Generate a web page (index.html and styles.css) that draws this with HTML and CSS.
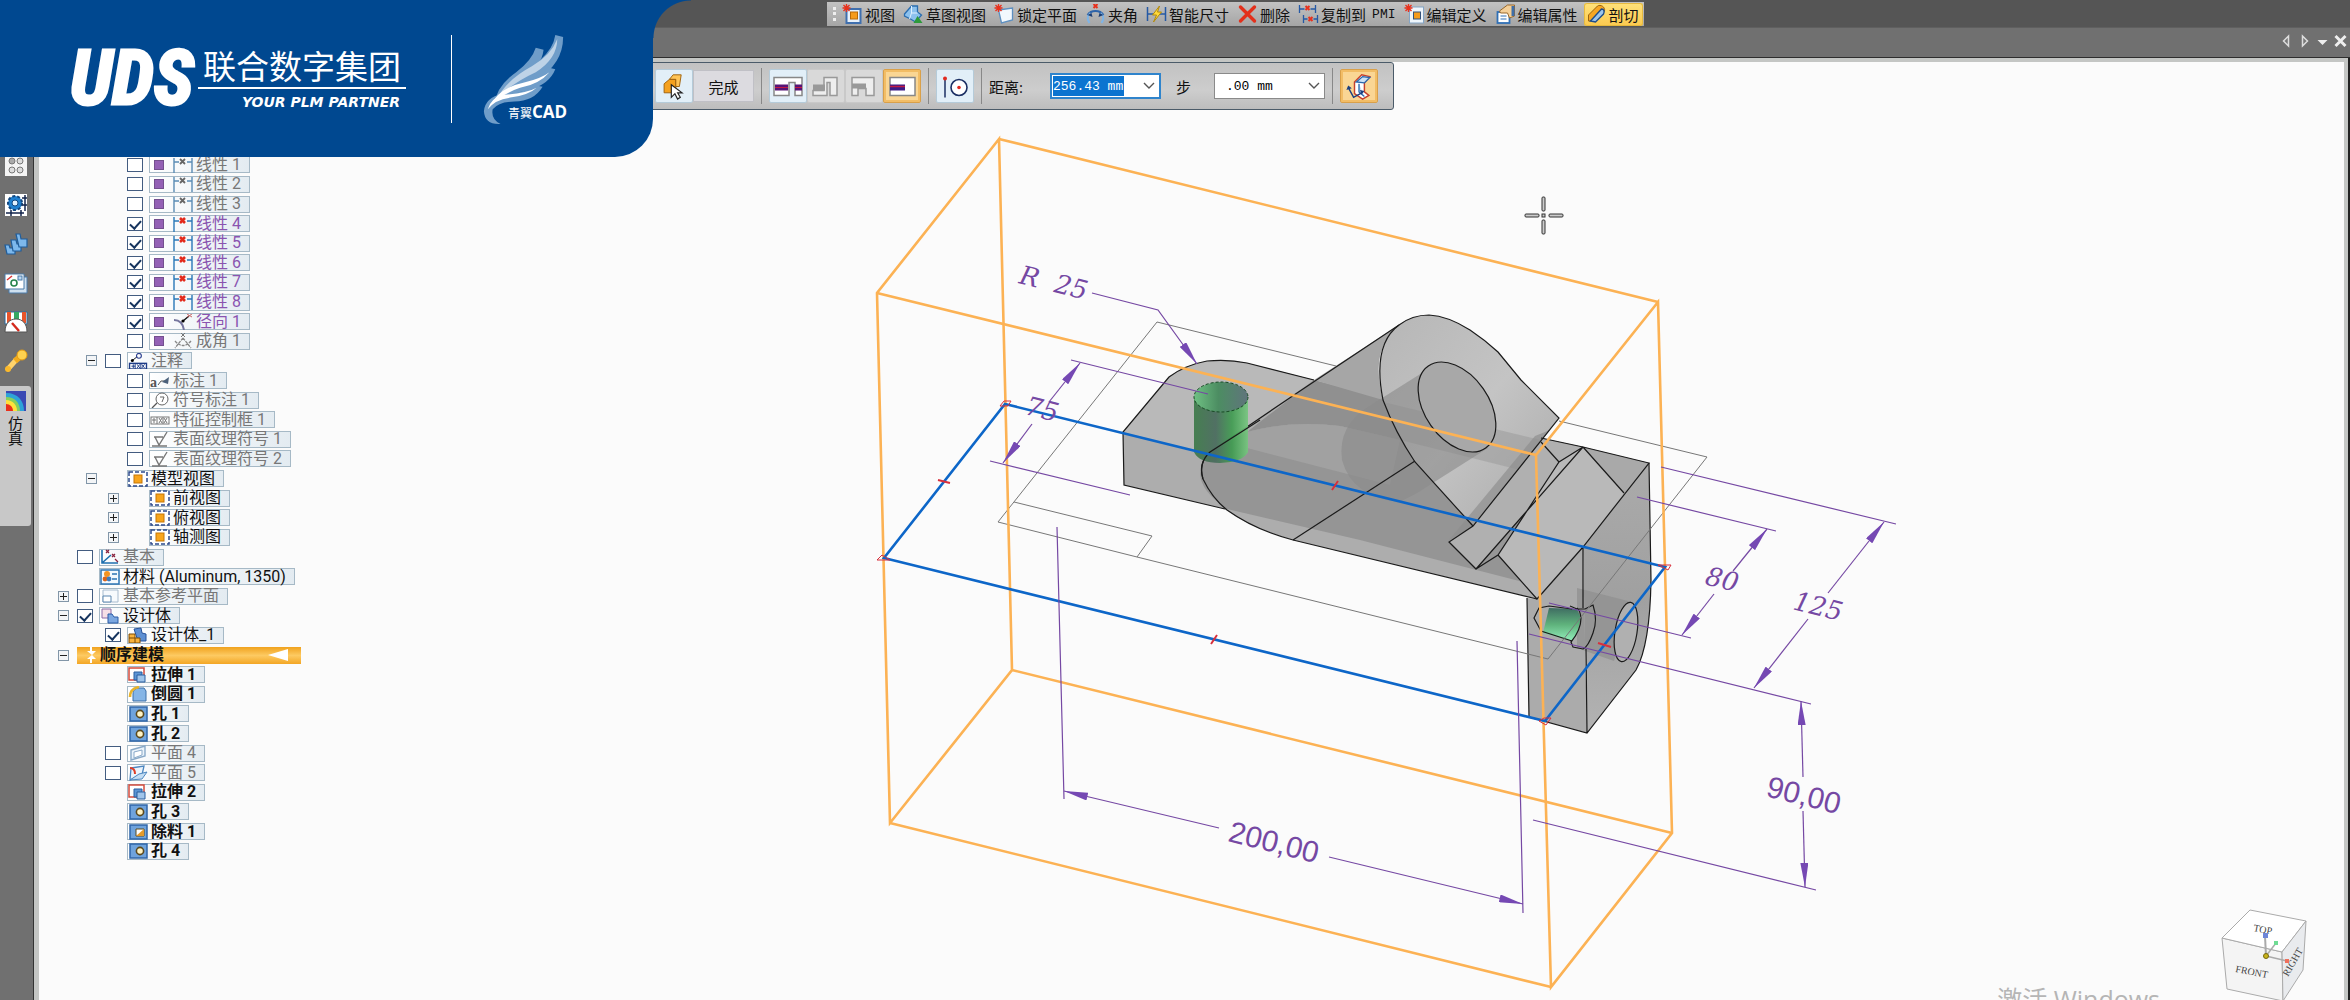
FILE: index.html
```
<!DOCTYPE html>
<html lang="zh-CN">
<head>
    <meta charset="UTF-8">
    <meta name="viewport" content="width=device-width, initial-scale=1.0">
    <title>青翼CAD</title>
    <link rel="stylesheet" href="styles.css">
</head>
<body>
<!-- shared icons -->
<svg class="defs" aria-hidden="true">
    <symbol id="i-view" viewBox="0 0 20 20"><rect x="4" y="5" width="14" height="14" fill="#e8f1fa" stroke="#3f6fae" stroke-width="2"/><rect x="8" y="8" width="7" height="7" fill="#f59b1c" stroke="#b96a08"/><path d="M4 0v8M0 4h8M1 1l6 6M7 1l-6 6" stroke="#e8321e" stroke-width="1.4"/></symbol>
    <symbol id="i-sketchview" viewBox="0 0 20 20"><path d="M1 10L8 2h6v6l4 3-6 7-5-3-6-3z" fill="#8cc1ee" stroke="#2a6db0" stroke-width="1.3"/><path d="M8 2v7h6M8 9l-2 6" stroke="#dff0ff" fill="none"/><path d="M10 19l4-7 5 7z" fill="#2d9a3a"/></symbol>
    <symbol id="i-lock" viewBox="0 0 20 20"><path d="M4 6l14-2v12L7 19z" fill="#f2f8fd" stroke="#5d8fc0" stroke-width="1.3"/><path d="M4 0v8M0 4h8M1 1l6 6M7 1l-6 6" stroke="#e8321e" stroke-width="1.4"/></symbol>
    <symbol id="i-angle" viewBox="0 0 20 20"><path d="M2 11C4 8 7 7 10 7s6 1 8 4" fill="none" stroke="#2d63a8" stroke-width="2"/><path d="M5 9Q0 13 4 19M15 9Q20 13 16 19" fill="none" stroke="#7fb4e6" stroke-width="2"/><path d="M2 11l4-2 1 4zM18 11l-4-2-1 4z" fill="#1d3f75"/><path d="M8 0l4 4M12 0L8 4" stroke="#e8321e" stroke-width="2"/></symbol>
    <symbol id="i-smart" viewBox="0 0 20 20"><path d="M1 3v14M19 3v14M1 10h18" stroke="#2559a5" stroke-width="1.5"/><path d="M13 2L6 11h4l-3 7 8-10h-4z" fill="#ffd93b" stroke="#b38a0b"/></symbol>
    <symbol id="i-delete" viewBox="0 0 20 20"><path d="M3 3l14 14M17 3L3 17" stroke="#e3301b" stroke-width="3.4" stroke-linecap="round"/></symbol>
    <symbol id="i-copy" viewBox="0 0 20 20"><path d="M1 1v8M17 1v8M5 11v8M19 11v8M1 5h5M12 5h5M5 15h4M15 15h4" stroke="#2559a5" stroke-width="1.3"/><path d="M7 2l4 4M11 2L7 6M10 13l4 4M14 13l-4 4" stroke="#e8321e" stroke-width="2"/></symbol>
    <symbol id="i-editdef" viewBox="0 0 20 20"><rect x="5" y="3" width="14" height="16" fill="#eef5fb" stroke="#84a5c6"/><rect x="9" y="8" width="7" height="7" fill="#f59b1c" stroke="#34527a"/><path d="M4 0v8M0 4h8M1 1l6 6M7 1l-6 6" stroke="#e8321e" stroke-width="1.4"/></symbol>
    <symbol id="i-editprop" viewBox="0 0 20 20"><rect x="2" y="8" width="12" height="11" fill="#fff" stroke="#2f6fb5" stroke-width="1.8"/><path d="M5 12h6M5 15h6" stroke="#2f6fb5"/><path d="M4 7l8-6h7v11l-5 2-2-5H5z" fill="#f4cf98" stroke="#98672a"/><path d="M16 2h3v10h-3z" fill="#3f6ea8"/></symbol>
    <symbol id="i-section" viewBox="0 0 20 20"><path d="M2 17V11L11 2c3-2 8 1 7 5l-9 10z" fill="#f7a723" stroke="#9a6410"/><path d="M4 17L15 5c3 0 3 3 2 5l-8 8z" fill="#9cc5ec" stroke="#1e4d8a" stroke-width="1.4"/></symbol>

    <symbol id="i-dim" viewBox="0 0 20 16"><path d="M1 1v15M19 1v15M1 5h5M14 5h5" stroke="#2a78b8" stroke-width="1.4"/><path d="M7 2l5 5M12 2L7 7" stroke="#e32a1c" stroke-width="2.6"/></symbol>
    <symbol id="i-dim-off" viewBox="0 0 20 16"><path d="M1 1v15M19 1v15M1 5h5M14 5h5" stroke="#5a8cb5" stroke-width="1.4"/><path d="M7 2l5 5M12 2L7 7" stroke="#666" stroke-width="1.8"/></symbol>
    <symbol id="i-radial" viewBox="0 0 20 16"><path d="M1 6c6 0 9 4 10 10" fill="none" stroke="#76769e" stroke-width="2"/><path d="M10 7l6-5" stroke="#111" stroke-width="1.4"/><circle cx="10" cy="7" r="1.6"/><path d="M14 0l5 3M19 0l-5 3" stroke="#c66"/></symbol>
    <symbol id="i-angular" viewBox="0 0 20 16"><path d="M10 5L2 15M10 5l8 10M2 8q8 9 16 0" fill="none" stroke="#888" stroke-width="1.3" stroke-dasharray="3 1"/><path d="M8 0l4 4M12 0L8 4" stroke="#777"/></symbol>
    <symbol id="i-note" viewBox="0 0 20 17"><path d="M4 8l5-4" stroke="#111"/><circle cx="4" cy="8" r="1.6"/><circle cx="11" cy="3" r="2.6" fill="none" stroke="#2b3f90" stroke-width="1.2"/><rect x="1" y="11" width="18" height="6" fill="#fff" stroke="#1d3b86" stroke-width="1.5"/><path d="M3 14h4M5 12v4M7 11v6M13 11v6M9 12l3 4M12 12l-3 4M14 12l3 4M17 12l-3 4" stroke="#1d3b86"/></symbol>
    <symbol id="i-balloon" viewBox="0 0 20 16"><circle cx="12" cy="7" r="6" fill="#fff" stroke="#666"/><path d="M7 11l-5 5" stroke="#555" stroke-width="1.3"/><path d="M10 5h4l-2 5" fill="none" stroke="#666"/></symbol>
    <symbol id="i-frame" viewBox="0 0 20 16"><rect x="1" y="5" width="18" height="7" fill="none" stroke="#777"/><path d="M2 8h4M4 6v5M7 5v7M13 5v7M9 6l3 5M12 6l-3 5M14 6l3 5M17 6l-3 5" stroke="#777"/></symbol>
    <symbol id="i-texture" viewBox="0 0 20 16"><path d="M4 6h9M5 6l4 8 8-13M2 15h15" fill="none" stroke="#777" stroke-width="1.4"/></symbol>
    <symbol id="i-mview" viewBox="0 0 20 16"><rect x="1" y="1" width="18" height="14" fill="#fff" stroke="#2c4a8c" stroke-width="1.5" stroke-dasharray="4 2"/><rect x="6" y="4" width="8" height="8" fill="#f8a51d" stroke="#c57607"/></symbol>
    <symbol id="i-base" viewBox="0 0 20 16"><path d="M2 1v13h16M2 14l9-8" fill="none" stroke="#1f6fae" stroke-width="1.6"/><path d="M6 1l3 3M9 1L6 4M12 5l3 3M15 5l-3 3M15 10l3 3" stroke="#8a2440" stroke-width="1.3"/></symbol>
    <symbol id="i-material" viewBox="0 0 20 16"><rect x="1" y="1" width="18" height="14" fill="#f4f9fe" stroke="#2d74b4" stroke-width="1.5"/><circle cx="7" cy="5" r="3" fill="#f39322"/><circle cx="5" cy="10" r="2.4" fill="#d9641c"/><circle cx="9" cy="10" r="2.4" fill="#3c7bbd"/><path d="M12 5h5M12 10h5" stroke="#2d74b4" stroke-width="1.5"/></symbol>
    <symbol id="i-refplane" viewBox="0 0 20 16"><path d="M3 2h15v12H3z" fill="#f7fafd" stroke="#a9bccf"/><path d="M3 8h8v6H3z" fill="#fff" stroke="#5c87b0"/></symbol>
    <symbol id="i-body" viewBox="0 0 20 16"><path d="M2 1h9v9H2z" fill="#f6dfe6" stroke="#8b6ca8"/><path d="M8 6h4l2 3h4v6H8z" fill="#7ba7e0" stroke="#2b5ba6"/></symbol>
    <symbol id="i-body1" viewBox="0 0 20 16"><path d="M6 2l7-1 1 5 4 1v7h-8z" fill="#5d8fd2" stroke="#27539b"/><path d="M1 7h6v4h5v5H1z" fill="#f8b33e" stroke="#7a4a05"/><path d="M1 11h6v5" fill="none" stroke="#7a4a05"/></symbol>
    <symbol id="i-extrude" viewBox="0 0 20 16"><rect x="1" y="1" width="15" height="12" fill="#fff" stroke="#d34b3c" stroke-width="1.5"/><path d="M6 5h8v8H6z" fill="#5b94d4" stroke="#2b5f9f"/><path d="M9 8h8v7H9z" fill="#9fc4ea" stroke="#2b5f9f"/></symbol>
    <symbol id="i-round" viewBox="0 0 20 16"><path d="M5 15V8c0-4 3-6 6-6h5l2 3v10z" fill="#85b5e6" stroke="#3a6ea8"/><path d="M2 11c0-6 3-9 9-10" fill="none" stroke="#e8b32a" stroke-width="2.6"/></symbol>
    <symbol id="i-hole" viewBox="0 0 20 16"><rect x="2" y="1" width="17" height="14" fill="#6fa3dc" stroke="#2f66a8" stroke-width="1.5"/><circle cx="12" cy="8" r="3.6" fill="#fff3c4" stroke="#5c4a1d" stroke-width="1.6"/></symbol>
    <symbol id="i-cut" viewBox="0 0 20 16"><rect x="2" y="1" width="17" height="14" fill="#6fa3dc" stroke="#2f66a8" stroke-width="1.5"/><path d="M8 5h8v7H8z" fill="#fff" stroke="#5c4a1d"/><path d="M16 5v7H8z" fill="#e49a2a"/></symbol>
    <symbol id="i-plane" viewBox="0 0 20 16"><path d="M3 5l14-4v10L3 15z" fill="#eaf3fb" stroke="#89a9c8" stroke-width="1.4"/><path d="M6 7l8-2v5l-8 3z" fill="#fff" stroke="#89a9c8"/></symbol>
    <symbol id="i-plane5" viewBox="0 0 20 16"><path d="M3 3l13-2-2 9-12 5z" fill="#eaf3fb" stroke="#4d87c0" stroke-width="1.3"/><path d="M2 15l12-1 5-7-8 2z" fill="#c3ddf3" stroke="#4d87c0"/><path d="M2 3c4 0 5 2 5 6" fill="none" stroke="#df3e28" stroke-width="2"/></symbol>

    <symbol id="i-pick" viewBox="0 0 28 30"><path d="M3 12l6-5h7v11l-5 4H3z" fill="#f5a11f" stroke="#9b5c06"/><path d="M9 7l4-5h9l-2 13h-4V7z" fill="#ffc457" stroke="#9b5c06"/><path d="M11 13v14l4-4 3 6 3-2-3-5h5z" fill="#fff" stroke="#222" stroke-width="1.3"/></symbol>
    <symbol id="i-sec1" viewBox="0 0 30 24"><path d="M1 3h28v18h-7V8h-6v13H1z" fill="#fff" stroke="#888" stroke-width="1.5"/><rect x="2" y="10" width="13" height="6" fill="#571476"/><rect x="22" y="10" width="7" height="6" fill="#571476"/><path d="M2 13h13M22 13h7" stroke="#c31a43"/></symbol>
    <symbol id="i-sec2" viewBox="0 0 30 24"><path d="M13 3h13v18h-7V8h-3v13H2v-5h11z" fill="#eee" stroke="#999" stroke-width="1.5"/><path d="M2 10h12v6H2z" fill="#999"/></symbol>
    <symbol id="i-sec3" viewBox="0 0 30 24"><path d="M3 3h22v18h-8v-7H9v7H3z" fill="#eee" stroke="#999" stroke-width="1.5"/><path d="M3 9h14v5H3z" fill="#999"/></symbol>
    <symbol id="i-sec4" viewBox="0 0 30 24"><rect x="3" y="3" width="25" height="18" fill="#fff" stroke="#888" stroke-width="1.5"/><rect x="3" y="10" width="15" height="6" fill="#3c1b86"/><path d="M3 12h15" stroke="#c31a43" stroke-width="1.5"/></symbol>
    <symbol id="i-circle" viewBox="0 0 30 26"><path d="M5 5v19" stroke="#1b2f63" stroke-width="1.5"/><circle cx="5" cy="5" r="2" fill="#e02a20"/><circle cx="19" cy="14" r="8" fill="#fff" stroke="#1b2f63" stroke-width="1.6"/><circle cx="19" cy="14" r="1.8" fill="#e02a20"/></symbol>
    <symbol id="i-flip" viewBox="0 0 30 30"><path d="M10 10l8-8 9 2-6 7v10l5 4-7 4-9-6z" fill="#fff" stroke="#c6402c" stroke-width="1.6"/><path d="M12 10l7-6 8 1-6 6zM15 12v9l6 5" fill="#cde2f5" stroke="#2c68ac" stroke-width="1.5"/><path d="M3 16l6 11 9-5" fill="none" stroke="#1b3f80" stroke-width="1.6"/><path d="M1 19l2-5 4 3zM16 19l5 1-3 4z" fill="#1b3f80"/></symbol>
    <symbol id="arrow-down" viewBox="0 0 12 8"><path d="M1 1l5 5 5-5" fill="none" stroke="#555" stroke-width="1.4"/></symbol>
</svg>

<div class="app">
    <header class="titlebar">
        <nav class="quickbar">
            <button><svg><use href="#i-view"/></svg>视图</button>
            <button><svg><use href="#i-sketchview"/></svg>草图视图</button>
            <button><svg><use href="#i-lock"/></svg>锁定平面</button>
            <button><svg><use href="#i-angle"/></svg>夹角</button>
            <button><svg><use href="#i-smart"/></svg>智能尺寸</button>
            <button><svg><use href="#i-delete"/></svg>删除</button>
            <button><svg><use href="#i-copy"/></svg>复制到<span class="mono">PMI</span></button>
            <button><svg><use href="#i-editdef"/></svg>编辑定义</button>
            <button><svg><use href="#i-editprop"/></svg>编辑属性</button>
            <button class="active"><svg><use href="#i-section"/></svg>剖切</button>
        </nav>
    </header>
    <div class="tabbar">
        <button aria-label="上一个"><svg viewBox="0 0 12 14"><path d="M8 2v10L3 7z" fill="#777" stroke="#ddd" stroke-width="1.5"/></svg></button>
        <button aria-label="下一个"><svg viewBox="0 0 12 14"><path d="M4 2v10l5-5z" fill="#777" stroke="#ddd" stroke-width="1.5"/></svg></button>
        <button aria-label="列表"><svg viewBox="0 0 12 14"><path d="M1 6h10L6 11z" fill="#eee"/></svg></button>
        <button aria-label="关闭"><svg viewBox="0 0 12 14"><path d="M1 2l10 10M11 2L1 12" stroke="#eee" stroke-width="3"/></svg></button>
    </div>

    <div class="body">
        <aside class="rail">
            <button aria-label="选择"><svg viewBox="0 0 24 24"><rect x="1" y="2" width="22" height="20" fill="#f4f4f4"/><g fill="#aaa" stroke="#777"><circle cx="8" cy="7" r="3"/><circle cx="16" cy="7" r="3" fill="#ddd"/><circle cx="8" cy="16" r="3" fill="#ddd"/><circle cx="16" cy="16" r="3" fill="#ddd"/></g></svg></button>
            <button aria-label="零件库"><svg viewBox="0 0 24 24"><rect x="1" y="1" width="22" height="22" fill="#fff"/><circle cx="11" cy="10" r="7" fill="#1e7fd0" stroke="#12477f" stroke-width="2" stroke-dasharray="3 2"/><circle cx="11" cy="10" r="3" fill="#dff0ff" stroke="#12477f"/><path d="M2 20h18M7 17v6M17 17v6M21 2v16M18 5h5M18 12h5" stroke="#14264c" stroke-width="1.5"/></svg></button>
            <button aria-label="零件族"><svg viewBox="0 0 24 24"><g fill="#7db8ec" stroke="#1f5d9b" stroke-width="1.2"><path d="M1 13h4l1 3h5v6H3z"/><path d="M7 8h5l1 4h4v7H9z"/><path d="M12 2h4l1 5h6v8h-8z"/></g></svg></button>
            <button aria-label="图层"><svg viewBox="0 0 24 24"><path d="M5 6h18v16H5z" fill="#cfe0ef" stroke="#4a7ba8"/><path d="M1 3h19v15H1z" fill="#fff" stroke="#4a7ba8"/><path d="M3 9l5-4" stroke="#d33" stroke-width="1.5"/><rect x="14" y="5" width="4" height="4" fill="#bcd9f3" stroke="#4a7ba8"/><circle cx="10" cy="12" r="3" fill="none" stroke="#27834b" stroke-width="1.6"/></svg></button>
            <button aria-label="传感器"><svg viewBox="0 0 24 24"><path d="M1 2h22v12H1z" fill="#fff" stroke="#2c6a9c"/><path d="M3 2h4v11H3zM18 2h4v11h-4z" fill="#e8552c"/><path d="M10 2h5v8h-5z" fill="#35a862"/><path d="M1 22C1 13 6 9 12 9s11 4 11 13z" fill="#fff" stroke="#555"/><path d="M8 13l7 8" stroke="#d42a1d" stroke-width="2.4"/></svg></button>
            <button aria-label="渲染"><svg viewBox="0 0 24 24"><path d="M4 20l8-9" stroke="#ffd36b" stroke-width="5" stroke-linecap="round"/><path d="M11 12l7-6" stroke="#f2ab1c" stroke-width="6"/><circle cx="18" cy="6" r="5" fill="#ffd24f" stroke="#e39a10"/><circle cx="4" cy="20" r="3" fill="#fbb92b"/></svg></button>
            <button class="current">
                <svg viewBox="0 0 20 20"><rect width="20" height="20" fill="#3b49b4"/><path d="M0 2c12 0 18 8 18 18H0z" fill="#2ea3d8"/><path d="M0 6c9 0 14 6 14 14H0z" fill="#86d05c"/><path d="M0 9c7 0 11 5 11 11H0z" fill="#ffe23c"/><path d="M0 13c4 0 7 3 7 7H0z" fill="#e9301c"/></svg>
                <span>仿真</span>
            </button>
        </aside>

        <main class="view">
            <!-- model viewport -->
            <svg class="scene" viewBox="39 62 2305 938" preserveAspectRatio="xMinYMin slice">
                <defs>
                    <linearGradient id="cyl"><stop offset="0" stop-color="#3c7a48"/><stop offset=".4" stop-color="#486a5c"/><stop offset=".7" stop-color="#3f9b50"/><stop offset="1" stop-color="#76c67f"/></linearGradient>
                    <linearGradient id="cylTop"><stop offset="0" stop-color="#6fc183"/><stop offset=".45" stop-color="#4c8d62"/><stop offset="1" stop-color="#60747c"/></linearGradient>
                    <linearGradient id="cut" x2="0" y2="1"><stop offset="0" stop-color="#3f6d62"/><stop offset=".5" stop-color="#5fb27c"/><stop offset="1" stop-color="#93efbb"/></linearGradient>
                    <linearGradient id="head" x2="1" y2="1"><stop offset="0" stop-color="#b6b6b6"/><stop offset=".5" stop-color="#c4c4c4"/><stop offset="1" stop-color="#a9a9a9"/></linearGradient>
                    <linearGradient id="side" x2="0" y2="1"><stop offset="0" stop-color="#ababab"/><stop offset=".5" stop-color="#a0a0a0"/><stop offset="1" stop-color="#b3b3b3"/></linearGradient>
                    <marker id="tip" viewBox="0 0 24 8" refX="24" refY="4" markerWidth="24" markerHeight="8" markerUnits="userSpaceOnUse" orient="auto"><path d="M0 0l24 4-24 4z" fill="#7548b3"/></marker>
                </defs>

                <g class="solid">
                    <!-- base plate -->
                    <path d="M1124 485L1123 432L1169 377Q1185 365 1207 361Q1228 359 1247 363L1541 438L1583 447L1649 463L1583 547L1537 599L1293 540Q1250 528 1225 509Z" fill="#adadad"/>
                    <path d="M1123 432L1169 377Q1185 365 1207 361Q1228 359 1247 363L1314 380L1210 452L1204 455Z" fill="#b9b9b9"/>
                    <path d="M1314 380L1541 438L1583 447L1559 462L1624 493L1500 463L1340 426Q1290 420 1247 432Z" fill="#909090"/>
                    <path d="M1210 452L1247 432Q1290 420 1340 426L1500 463L1560 480L1498 555L1527 583L1360 540L1227 509Q1184 480 1210 452Z" fill="#959595"/>
                    <path d="M1247 432Q1290 420 1340 426L1400 440L1390 485L1247 448Z" fill="#a1a1a1"/>
                    <!-- bracket head -->
                    <path d="M1314 380L1399 325Q1376 345 1379 377Q1380 388 1383 400Z" fill="#a6a6a6"/>
                    <path d="M1399 325Q1412 315 1429 315Q1448 316 1470 330Q1485 340 1498 352L1521 380L1559 418L1473 526L1415 462Q1395 432 1383 400Q1372 345 1399 325Z" fill="url(#head)"/>
                    <path d="M1383 402L1541 440L1520 470L1400 440Z" fill="#9a9a9a" opacity=".55"/>
                    <path d="M1425 371L1371 405Q1337 425 1342 460Q1352 497 1399 502L1417 493L1488 448Z" fill="#8a8a8a" opacity=".62"/>
                    <ellipse cx="1457" cy="407" rx="32" ry="50" transform="rotate(-35 1457 407)" fill="#a8a8a8"/>
                    <!-- web and slot -->
                    <path d="M1559 418L1473 526L1449 542L1476 569L1583 447L1541 438Z" fill="#b0b0b0"/>
                    <path d="M1535 436L1449 540L1473 526L1550 430Z" fill="#8f8f8f" opacity=".7"/>
                    <path d="M1583 447L1476 569L1498 555L1559 462Z" fill="#979797"/>
                    <path d="M1583 447L1559 462L1498 555L1537 599L1583 547L1624 493Z" fill="#b9b9b9"/>
                    <path d="M1583 447L1649 463L1624 493Z" fill="#a9a9a9"/>
                    <!-- right lug -->
                    <path d="M1649 463L1651 580Q1650 645 1636 670L1587 733L1583 547Z" fill="url(#side)"/>
                    <path d="M1527 598L1537 599L1583 547L1587 733L1529 717Z" fill="#ababab"/>
                    <path d="M1577 588L1632 602L1614 661L1577 648Z" fill="#8e8e8e" opacity=".7"/>
                    <ellipse cx="1626" cy="632" rx="11" ry="30" transform="rotate(9 1626 632)" fill="#b0b0b0"/>
                    <path d="M1549 608L1577 609L1581 618L1577 633L1572 641L1543 633Z" fill="url(#cut)"/>
                </g>

                <g class="edge">
                    <path d="M1225 509L1124 485L1123 432L1169 377Q1185 365 1207 361Q1228 359 1247 363L1314 380"/>
                    <path d="M1399 325L1300 391L1210 452Q1198 463 1203 479Q1212 498 1227 510Q1255 530 1293 540L1537 599"/>
                    <path d="M1293 540L1415 461"/>
                    <path d="M1473 526L1415 462Q1395 432 1383 400Q1372 345 1399 325Q1412 315 1429 315Q1448 316 1470 330Q1485 340 1498 352L1521 380L1559 418L1473 526L1449 542L1476 569L1583 447L1559 462L1498 555L1476 569"/>
                    <path d="M1541 438L1583 447L1649 463L1583 547L1537 599L1498 555M1583 447L1624 493M1541 442L1559 462M1583 547V608"/>
                    <path d="M1649 463L1651 580Q1650 645 1636 670L1587 733L1529 717L1527 598M1587 733L1586 649"/>
                    <ellipse cx="1457" cy="407" rx="32" ry="50" transform="rotate(-35 1457 407)"/>
                    <ellipse cx="1626" cy="632" rx="11" ry="30" transform="rotate(9 1626 632)"/>
                    <path d="M1570 606L1577 609L1585 609L1593 605Q1598 620 1593 633Q1588 647 1583 649L1573 647L1571 642Q1581 630 1581 618Q1580 610 1577 608"/>
                    <path d="M1572 609L1549 606L1539 608L1534 618L1541 631L1572 641"/>
                </g>

                <path d="M1194 397V452Q1199 463 1220 463Q1243 462 1248 452V397Z" fill="url(#cyl)" opacity=".92"/>
                <ellipse cx="1221" cy="397" rx="27" ry="15" fill="url(#cylTop)"/>
                <ellipse cx="1221" cy="397" rx="27" ry="15" fill="none" stroke="#174a24" stroke-dasharray="3 2"/>
                <path class="over-edge" d="M1260 420L1210 452Q1198 463 1203 479"/>

                <path class="sketch" d="M1336 366L1157 322L998 522L1137 557L1548 659L1707 457L1559 421M1014 502L1152 536L1137 557"/>

                <g class="box">
                    <path d="M999 139L877 293L890 823L1012 670Z"/>
                    <path d="M1658 302L1536 455L1551 987L1672 833Z"/>
                    <path d="M999 139L1658 302M877 293L1536 455M890 823L1551 987M1012 670L1672 833"/>
                </g>
                <path class="plane" d="M1005 404L1665 567L1545 721L884 558Z"/>
                <g class="marks">
                    <path d="M938 480l12 3M1332 490l6-9M1211 644l6-9M1598 643l13 4" stroke-width="2"/>
                    <path d="M1000 406l4-5h7l-3 5zM877 560l5-5 8 5zM1658 565h13l-3 5zM1539 721l5-3h7l-5 7z"/>
                </g>

                <g class="dims">
                    <path d="M1071 360L1208 394M990 461L1130 495M1661 467L1896 524M1637 497L1776 531M1549 603L1691 638M1529 634L1811 704M1533 820L1816 890M1057 527L1064 799M1517 641L1523 913"/>
                    <path d="M1092 293L1158 310L1197 364" marker-end="url(#tip)"/>
                    <path d="M1049 402L1080 363" marker-end="url(#tip)"/>
                    <path d="M1032 424L1003 463" marker-end="url(#tip)"/>
                    <path d="M1733 571L1767 529" marker-end="url(#tip)"/>
                    <path d="M1714 594L1682 635" marker-end="url(#tip)"/>
                    <path d="M1828 593L1884 522" marker-end="url(#tip)"/>
                    <path d="M1808 619L1754 688" marker-end="url(#tip)"/>
                    <path d="M1803 777L1801 701" marker-end="url(#tip)"/>
                    <path d="M1803 811L1805 887" marker-end="url(#tip)"/>
                    <path d="M1219 828L1064 791" marker-end="url(#tip)"/>
                    <path d="M1329 857L1523 904" marker-end="url(#tip)"/>
                </g>
                <g class="dim-serif">
                    <text transform="translate(1018 283) rotate(14)">R&nbsp; 25</text>
                    <text transform="translate(1024 414) rotate(14)">75</text>
                    <text transform="translate(1704 584) rotate(14)">80</text>
                    <text transform="translate(1792 609) rotate(14)">125</text>
                </g>
                <g class="dim-sans">
                    <text transform="translate(1227 841) rotate(14)">200,00</text>
                    <text transform="translate(1765 796) rotate(14)">90,00</text>
                </g>

                <g class="cursor">
                    <rect x="1542" y="197" width="3" height="14" rx="1"/>
                    <rect x="1542" y="220" width="3" height="14" rx="1"/>
                    <rect x="1525" y="214" width="14" height="3" rx="1"/>
                    <rect x="1549" y="214" width="14" height="3" rx="1"/>
                    <rect x="1542" y="214" width="3" height="3"/>
                </g>

                <!-- view cube -->
                <g class="cube">
                    <path d="M2222 938L2282 952L2283 1001L2227 989Z" fill="#f4f4f4"/>
                    <path d="M2250 910L2306 921L2282 952L2222 938Z" fill="#fff"/>
                    <path d="M2306 921L2303 970L2283 1001L2282 952Z" fill="#e9ebee"/>
                    <text transform="translate(2235 972) rotate(11)">FRONT</text>
                    <text transform="translate(2253 931) rotate(11)">TOP</text>
                    <text transform="translate(2288 977) rotate(-60)">RIGHT</text>
                    <path d="M2266 956L2265 936" stroke="#7583d8" stroke-width="2"/>
                    <path d="M2266 956L2276 943" stroke="#6fdc94" stroke-width="1.5"/>
                    <path d="M2266 956L2287 961" stroke="#f08573" stroke-width="1.5"/>
                    <rect x="2263" y="933" width="5" height="5" fill="#6e86d8"/>
                    <rect x="2274" y="941" width="4" height="4" fill="#6fdc94"/>
                    <rect x="2285" y="959" width="4" height="4" fill="#f0705c"/>
                    <circle cx="2266" cy="956" r="2.5" fill="#c9b41b" stroke="#77690e"/>
                </g>
            </svg>

            <form class="cmdbar">
                <button type="button" class="tool hot" aria-label="选择"><svg><use href="#i-pick"/></svg></button>
                <button type="button" class="done">完成</button>
                <i class="sep"></i>
                <div class="group">
                    <button type="button" class="tool hot" aria-label="两侧"><svg><use href="#i-sec1"/></svg></button>
                    <button type="button" class="tool" aria-label="左侧"><svg><use href="#i-sec2"/></svg></button>
                    <button type="button" class="tool" aria-label="右侧"><svg><use href="#i-sec3"/></svg></button>
                    <button type="button" class="tool on" aria-label="限定范围"><svg><use href="#i-sec4"/></svg></button>
                </div>
                <i class="sep"></i>
                <button type="button" class="tool hot" aria-label="关键点"><svg><use href="#i-circle"/></svg></button>
                <i class="sep"></i>
                <label for="dist" class="dist-label">距离:</label>
                <div class="combo focus"><input id="dist" type="text" value="256.43 mm"><button type="button" aria-label="展开"><svg><use href="#arrow-down"/></svg></button></div>
                <label for="step" class="step-label">步</label>
                <div class="combo"><input id="step" type="text" value=".00 mm"><button type="button" aria-label="展开"><svg><use href="#arrow-down"/></svg></button></div>
                <i class="sep"></i>
                <button type="button" class="tool on" aria-label="翻转"><svg><use href="#i-flip"/></svg></button>
            </form>

            <ul class="tree">
                <li class="l2"><i class="exp"></i><input type="checkbox" id="n1"><label for="n1" class="off"><i class="sq"></i><svg><use href="#i-dim-off"/></svg>线性 1</label></li>
                <li class="l2"><i class="exp"></i><input type="checkbox" id="n2"><label for="n2" class="off"><i class="sq"></i><svg><use href="#i-dim-off"/></svg>线性 2</label></li>
                <li class="l2"><i class="exp"></i><input type="checkbox" id="n3"><label for="n3" class="off"><i class="sq"></i><svg><use href="#i-dim-off"/></svg>线性 3</label></li>
                <li class="l2"><i class="exp"></i><input type="checkbox" id="n4" checked><label for="n4" class="pmi"><i class="sq"></i><svg><use href="#i-dim"/></svg>线性 4</label></li>
                <li class="l2"><i class="exp"></i><input type="checkbox" id="n5" checked><label for="n5" class="pmi"><i class="sq"></i><svg><use href="#i-dim"/></svg>线性 5</label></li>
                <li class="l2"><i class="exp"></i><input type="checkbox" id="n6" checked><label for="n6" class="pmi"><i class="sq"></i><svg><use href="#i-dim"/></svg>线性 6</label></li>
                <li class="l2"><i class="exp"></i><input type="checkbox" id="n7" checked><label for="n7" class="pmi"><i class="sq"></i><svg><use href="#i-dim"/></svg>线性 7</label></li>
                <li class="l2"><i class="exp"></i><input type="checkbox" id="n8" checked><label for="n8" class="pmi"><i class="sq"></i><svg><use href="#i-dim"/></svg>线性 8</label></li>
                <li class="l2"><i class="exp"></i><input type="checkbox" id="n9" checked><label for="n9" class="pmi"><i class="sq"></i><svg><use href="#i-radial"/></svg>径向 1</label></li>
                <li class="l2"><i class="exp"></i><input type="checkbox" id="n10"><label for="n10" class="off"><i class="sq"></i><svg><use href="#i-angular"/></svg>成角 1</label></li>
                <li class="l1"><button class="exp minus" aria-label="折叠"></button><input type="checkbox" id="n11"><label for="n11" class="off"><svg><use href="#i-note"/></svg>注释</label></li>
                <li class="l2"><i class="exp"></i><input type="checkbox" id="n12"><label for="n12" class="off"><svg viewBox="0 0 20 16"><text x="0" y="14" class="glyph">a</text><path d="M8 12l3-4h4" stroke="#555" fill="none"/><path d="M12 9l7-5-1 7z" fill="#4c617b"/></svg>标注 1</label></li>
                <li class="l2"><i class="exp"></i><input type="checkbox" id="n13"><label for="n13" class="off"><svg><use href="#i-balloon"/></svg>符号标注 1</label></li>
                <li class="l2"><i class="exp"></i><input type="checkbox" id="n14"><label for="n14" class="off"><svg><use href="#i-frame"/></svg>特征控制框 1</label></li>
                <li class="l2"><i class="exp"></i><input type="checkbox" id="n15"><label for="n15" class="off"><svg><use href="#i-texture"/></svg>表面纹理符号 1</label></li>
                <li class="l2"><i class="exp"></i><input type="checkbox" id="n16"><label for="n16" class="off"><svg><use href="#i-texture"/></svg>表面纹理符号 2</label></li>
                <li class="l1"><button class="exp minus" aria-label="折叠"></button><i class="nobox"></i><span class="node"><svg><use href="#i-mview"/></svg>模型视图</span></li>
                <li class="l2"><button class="exp plus" aria-label="展开"></button><i class="nobox"></i><span class="node"><svg><use href="#i-mview"/></svg>前视图</span></li>
                <li class="l2"><button class="exp plus" aria-label="展开"></button><i class="nobox"></i><span class="node"><svg><use href="#i-mview"/></svg>俯视图</span></li>
                <li class="l2"><button class="exp plus" aria-label="展开"></button><i class="nobox"></i><span class="node"><svg><use href="#i-mview"/></svg>轴测图</span></li>
                <li class="l0"><i class="exp"></i><input type="checkbox" id="n21"><label for="n21" class="off"><svg><use href="#i-base"/></svg>基本</label></li>
                <li class="l0"><i class="exp"></i><i class="nobox"></i><span class="node"><svg><use href="#i-material"/></svg>材料 (Aluminum, 1350)</span></li>
                <li class="l0"><button class="exp plus" aria-label="展开"></button><input type="checkbox" id="n23"><label for="n23" class="off"><svg><use href="#i-refplane"/></svg>基本参考平面</label></li>
                <li class="l0"><button class="exp minus" aria-label="折叠"></button><input type="checkbox" id="n24" checked><label for="n24"><svg><use href="#i-body"/></svg>设计体</label></li>
                <li class="l1"><i class="exp"></i><input type="checkbox" id="n25" checked><label for="n25"><svg><use href="#i-body1"/></svg>设计体_1</label></li>
                <li class="l0"><button class="exp minus" aria-label="折叠"></button><span class="stage"><svg viewBox="0 0 20 16"><path d="M13 0v4h-3l5 4 4-4h-4V0zM13 16v-4h-3l5-4 4 4h-4v4z" fill="#fff"/></svg>顺序建模<svg class="flag" viewBox="0 0 20 12"><path d="M20 0v12L0 6z" fill="#fff"/></svg></span></li>
                <li class="l1"><i class="exp"></i><i class="nobox"></i><span class="node feat"><svg><use href="#i-extrude"/></svg>拉伸 1</span></li>
                <li class="l1"><i class="exp"></i><i class="nobox"></i><span class="node feat"><svg><use href="#i-round"/></svg>倒圆 1</span></li>
                <li class="l1"><i class="exp"></i><i class="nobox"></i><span class="node feat"><svg><use href="#i-hole"/></svg>孔 1</span></li>
                <li class="l1"><i class="exp"></i><i class="nobox"></i><span class="node feat"><svg><use href="#i-hole"/></svg>孔 2</span></li>
                <li class="l1"><i class="exp"></i><input type="checkbox" id="n31"><label for="n31" class="off"><svg><use href="#i-plane"/></svg>平面 4</label></li>
                <li class="l1"><i class="exp"></i><input type="checkbox" id="n32"><label for="n32" class="off"><svg><use href="#i-plane5"/></svg>平面 5</label></li>
                <li class="l1"><i class="exp"></i><i class="nobox"></i><span class="node feat"><svg><use href="#i-extrude"/></svg>拉伸 2</span></li>
                <li class="l1"><i class="exp"></i><i class="nobox"></i><span class="node feat"><svg><use href="#i-hole"/></svg>孔 3</span></li>
                <li class="l1"><i class="exp"></i><i class="nobox"></i><span class="node feat"><svg><use href="#i-cut"/></svg>除料 1</span></li>
                <li class="l1"><i class="exp"></i><i class="nobox"></i><span class="node feat"><svg><use href="#i-hole"/></svg>孔 4</span></li>
            </ul>

            <p class="activate">激活 Windows</p>
        </main>
    </div>
</div>

<!-- brand plate over the top left corner -->
<div class="brand">
    <strong class="uds">UDS</strong>
    <div class="company">
        <p class="name">联合数字集团</p>
        <p class="slogan">YOUR PLM PARTNER</p>
    </div>
    <div class="product">
        <svg viewBox="0 0 84 92">
            <g fill="#6f9dc9">
                <path d="M74 0L82 2Q82 30 54 46Q30 58 18 66Q40 38 58 26Q72 14 74 0Z"/>
                <path d="M54 13L62 15Q60 32 42 44Q24 54 12 70Q14 52 34 38Q50 26 54 13Z"/>
                <path d="M66 33L74 35Q68 50 48 56Q24 60 8 74Q22 50 46 46Q60 42 66 33Z"/>
                <path d="M52 51L61 53Q52 68 32 68Q16 68 10 76Q8 86 18 91Q2 92 1 78Q2 64 20 60Q42 60 52 51Z"/>
            </g>
            <g fill="#fff">
                <path d="M76 4Q76 24 54 38Q28 50 14 66Q24 46 50 32Q70 20 76 4Z" opacity=".55"/>
                <path d="M68 38Q58 50 38 54Q20 60 8 72Q16 54 44 48Q60 44 68 38Z"/>
                <path d="M55 54Q46 62 28 64Q12 66 5 76Q8 64 22 61Q44 60 55 54Z"/>
            </g>
        </svg>
        <span class="prodname">青翼<b>CAD</b></span>
    </div>
</div>
</body>
</html>
```
FILE: styles.css
```
*
{
    box-sizing: border-box;
}
body
{
    margin: 0;
    font-family: "Open Sans", "Noto Sans CJK SC", sans-serif;
    font-size: 16px;
    color: #111;
    overflow: hidden;
}
button
{
    margin: 0;
    padding: 0;
    border: none;
    background: none;
    font: inherit;
    color: inherit;
}
p,
ul
{
    margin: 0;
    padding: 0;
}
.defs
{
    display: none;
}
.app
{
    display: flex;
    flex-direction: column;
    height: 100vh;
}

/* title bar */
.titlebar
{
    height: 28px;
    padding: 2px 0 0 827px;
    background: #555;
    border-bottom: 1px solid #5f5f5f;
}
.quickbar
{
    display: inline-flex;
    align-items: center;
    gap: 4px;
    height: 24px;
    padding: 0 1px 0 6px;
    background: linear-gradient(#c2c2c2, #a5a5a5);
    font-size: 15px;
}
.quickbar::before
{
    content: "";
    width: 0;
    height: 14px;
    border-left: 3px dotted #eee;
}
.quickbar button
{
    display: flex;
    align-items: center;
    gap: 2px;
    height: 23px;
    padding: 0 2px;
    white-space: nowrap;
}
.quickbar button:hover
{
    background: #d5dfe8;
}
.quickbar svg
{
    width: 21px;
    height: 20px;
}
.quickbar button.active
{
    background: linear-gradient(#ffe27a, #fbc94f);
    border-radius: 3px;
    box-shadow: inset 0 0 0 1px #e5b93f;
    padding-right: 4px;
}
.mono
{
    font-family: "Liberation Mono", monospace;
    font-size: 13px;
    margin-left: 4px;
}
.tabbar
{
    display: flex;
    justify-content: flex-end;
    align-items: center;
    gap: 5px;
    height: 30px;
    padding: 0 3px 4px 0;
    background: #707070;
    border-bottom: 1px solid #2e2e2e;
}
.tabbar button,
.tabbar svg
{
    display: block;
    width: 13px;
    height: 14px;
}

/* left rail */
.body
{
    flex: 1;
    display: flex;
    min-height: 0;
    border-right: 2px solid #222;
}
.rail
{
    display: flex;
    flex-direction: column;
    width: 34px;
    padding-top: 88px;
    background: #707070;
    border-right: 1px solid #333;
}
.rail button
{
    display: flex;
    justify-content: center;
    align-items: center;
    width: 32px;
    height: 39px;
}
.rail svg
{
    width: 24px;
    height: 24px;
}
.rail .current
{
    flex-direction: column;
    justify-content: flex-start;
    gap: 5px;
    width: 31px;
    height: 140px;
    margin-top: 6px;
    padding-top: 5px;
    background: #c8c8c8;
    border-radius: 0 3px 3px 0;
    font-size: 15px;
}
.rail .current svg
{
    width: 20px;
    height: 20px;
}
.rail .current span
{
    writing-mode: vertical-rl;
}

/* document view */
.view
{
    position: relative;
    flex: 1;
    overflow: hidden;
    background: #fbfbfb;
    border: solid #c4c6c4;
    border-width: 4px 4px 0 5px;
}
.scene
{
    position: absolute;
    top: 0;
    left: 0;
    width: 100%;
    height: 100%;
}
.edge path,
.edge ellipse,
.over-edge
{
    fill: none;
    stroke: #1a1a1a;
    stroke-width: 1.2;
}
.sketch
{
    fill: none;
    stroke: #777;
}
.box path
{
    fill: none;
    stroke: #fcb254;
    stroke-width: 2.6;
}
.plane
{
    fill: none;
    stroke: #0d66c8;
    stroke-width: 2.6;
}
.marks path
{
    fill: none;
    stroke: #d8303c;
}
.dims path
{
    fill: none;
    stroke: #7548a3;
    stroke-width: 1.2;
}
.dim-serif text
{
    font-family: "DejaVu Serif", serif;
    font-style: italic;
    font-size: 26px;
    fill: #7548a3;
}
.dim-sans text
{
    font-family: "Liberation Sans", sans-serif;
    font-size: 30px;
    fill: #7548a3;
}
.cursor rect
{
    fill: #ccc;
    stroke: #333;
}
.cube path
{
    stroke: #aaa;
}
.cube text
{
    font-family: "Liberation Serif", serif;
    font-size: 10px;
    fill: #444;
}
.glyph
{
    font-family: "Liberation Serif", serif;
    font-weight: bold;
    font-size: 14px;
    fill: #555;
}

/* command bar */
.cmdbar
{
    position: relative;
    display: flex;
    align-items: center;
    width: 800px;
    height: 48px;
    margin-left: 555px;
    padding-left: 60px;
    background: linear-gradient(#c2c2c2, #cdcdcd 60%, #bdbdbd);
    border: 1px solid #4b5b69;
    border-radius: 0 3px 3px 0;
    font-size: 15px;
}
.tool
{
    display: flex;
    justify-content: center;
    align-items: center;
    width: 38px;
    height: 34px;
    background: #d9d9d9;
    border: 1px solid #c9c9c9;
    border-radius: 2px;
}
.tool svg
{
    width: 30px;
    height: 27px;
}
.tool.hot
{
    background: #e2eff8;
    border-color: #b5cbd9;
}
.tool.on
{
    background: #fad694;
    border-color: #d9a04a;
    box-shadow: inset 0 0 0 2px #f2bd66;
}
.done
{
    width: 61px;
    height: 32px;
    background: #dcdbe0;
    border: 1px solid #c0c0c6;
}
.sep
{
    width: 1px;
    height: 36px;
    margin: 0 7px;
    background: #888;
}
.group
{
    display: flex;
}
.dist-label
{
    width: 61px;
}
.combo
{
    display: flex;
    align-items: center;
    width: 111px;
    height: 26px;
    padding-left: 2px;
    background: #fff;
    border: 1px solid #8a8a8a;
}
.combo input
{
    width: 80px;
    height: 20px;
    padding: 0 0 0 9px;
    border: none;
    background: none;
    font-family: "Liberation Mono", monospace;
    font-size: 13px;
}
.combo.focus
{
    border: 2px solid #2f84cc;
    padding-left: 1px;
}
.combo.focus input
{
    width: 71px;
    padding: 0;
    background: #0c74d0;
    color: #fff;
}
.combo button
{
    margin: 0 4px 0 auto;
}
.combo svg
{
    display: block;
    width: 12px;
    height: 8px;
}
.step-label
{
    padding: 0 23px 0 15px;
}

/* feature tree */
.tree
{
    position: relative;
    display: grid;
    grid-template-rows: repeat(36, 1fr);
    width: 300px;
    height: 706px;
    margin-top: 45px;
    list-style: none;
    font-family: Roboto, "Noto Sans CJK SC", sans-serif;
    line-height: 16px;
    white-space: nowrap;
}
.tree li
{
    display: flex;
    align-items: center;
    min-height: 0;
}
.tree .l0
{
    padding-left: 19px;
}
.tree .l1
{
    padding-left: 47px;
}
.tree .l2
{
    padding-left: 69px;
}
.exp
{
    width: 11px;
    height: 11px;
    margin-right: 8px;
}
.exp.minus,
.exp.plus
{
    border: 1px solid #8296a8;
    background: linear-gradient(#222, #222) center / 7px 1px no-repeat, #f3f5f7;
}
.exp.plus
{
    background: linear-gradient(#222, #222) center / 7px 1px no-repeat, linear-gradient(#222, #222) center / 1px 7px no-repeat, #f3f5f7;
}
.tree input
{
    appearance: none;
    display: flex;
    justify-content: center;
    width: 16px;
    height: 14px;
    margin: 0 6px 0 0;
    border: 1px solid #435c80;
    background: #fff;
}
.tree input:checked::after
{
    content: "";
    width: 5px;
    height: 9px;
    border: solid #16345e;
    border-width: 0 2px 2px 0;
    transform: rotate(42deg);
}
.nobox
{
    width: 16px;
    margin-right: 6px;
}
.tree label,
.node
{
    display: flex;
    align-items: center;
    height: 17px;
    padding-right: 8px;
    background: linear-gradient(100deg, #fff, #e3ebf1);
    border: 1px solid #a6b9c6;
}
.tree label svg,
.node svg
{
    width: 20px;
    height: 16px;
    margin-right: 3px;
}
.sq
{
    width: 10px;
    height: 10px;
    margin: 0 9px 0 4px;
    background: #9461b5;
    border: 1px solid #74508f;
}
.tree .off
{
    color: #777;
}
.tree .pmi
{
    color: #8a54b0;
}
.feat
{
    font-weight: bold;
}
.stage
{
    display: flex;
    align-items: center;
    width: 224px;
    height: 17px;
    padding-right: 13px;
    background: linear-gradient(#f0a21e, #fdca62 50%, #f3a625);
    font-weight: bold;
}
.stage svg
{
    width: 20px;
    height: 16px;
    margin-right: 3px;
}
.stage .flag
{
    height: 12px;
    margin: 0 0 0 auto;
}
.activate
{
    position: absolute;
    right: 184px;
    bottom: -17px;
    font-size: 25px;
    line-height: 36px;
    color: #b5b5b5;
}

/* brand plate */
.brand
{
    position: absolute;
    top: 0;
    left: 0;
    display: flex;
    width: 653px;
    height: 157px;
    padding-left: 70px;
    background: #004890;
    border-radius: 0 0 38px 0;
    color: #fff;
}
.brand::after
{
    content: "";
    position: absolute;
    top: 0;
    left: 100%;
    width: 38px;
    height: 38px;
    background: radial-gradient(circle at 100% 100%, transparent 37px, #004890 38px);
}
.uds
{
    width: 128px;
    margin-top: 38px;
    font-family: "Liberation Sans Narrow", "Roboto Condensed", "Liberation Sans", sans-serif;
    font-style: italic;
    font-size: 76px;
    line-height: 80px;
    -webkit-text-stroke: 3px #fff;
}
.company
{
    width: 208px;
    margin-top: 46px;
    text-align: center;
}
.name
{
    height: 43px;
    border-bottom: 2px solid #fff;
    font-size: 33px;
    line-height: 42px;
    white-space: nowrap;
}
.slogan
{
    padding: 5px 6px 0 0;
    text-align: right;
    font-family: "DejaVu Sans", sans-serif;
    font-style: italic;
    font-weight: bold;
    font-size: 14px;
    white-space: nowrap;
}
.product
{
    position: relative;
    width: 125px;
    height: 88px;
    margin: 35px 0 0 45px;
    padding-left: 30px;
    border-left: 1px solid #fff;
}
.product svg
{
    width: 84px;
    height: 90px;
}
.prodname
{
    position: absolute;
    left: 56px;
    bottom: -1px;
    font-size: 12px;
    line-height: 20px;
    white-space: nowrap;
}
.prodname b
{
    font-size: 17px;
}
```
